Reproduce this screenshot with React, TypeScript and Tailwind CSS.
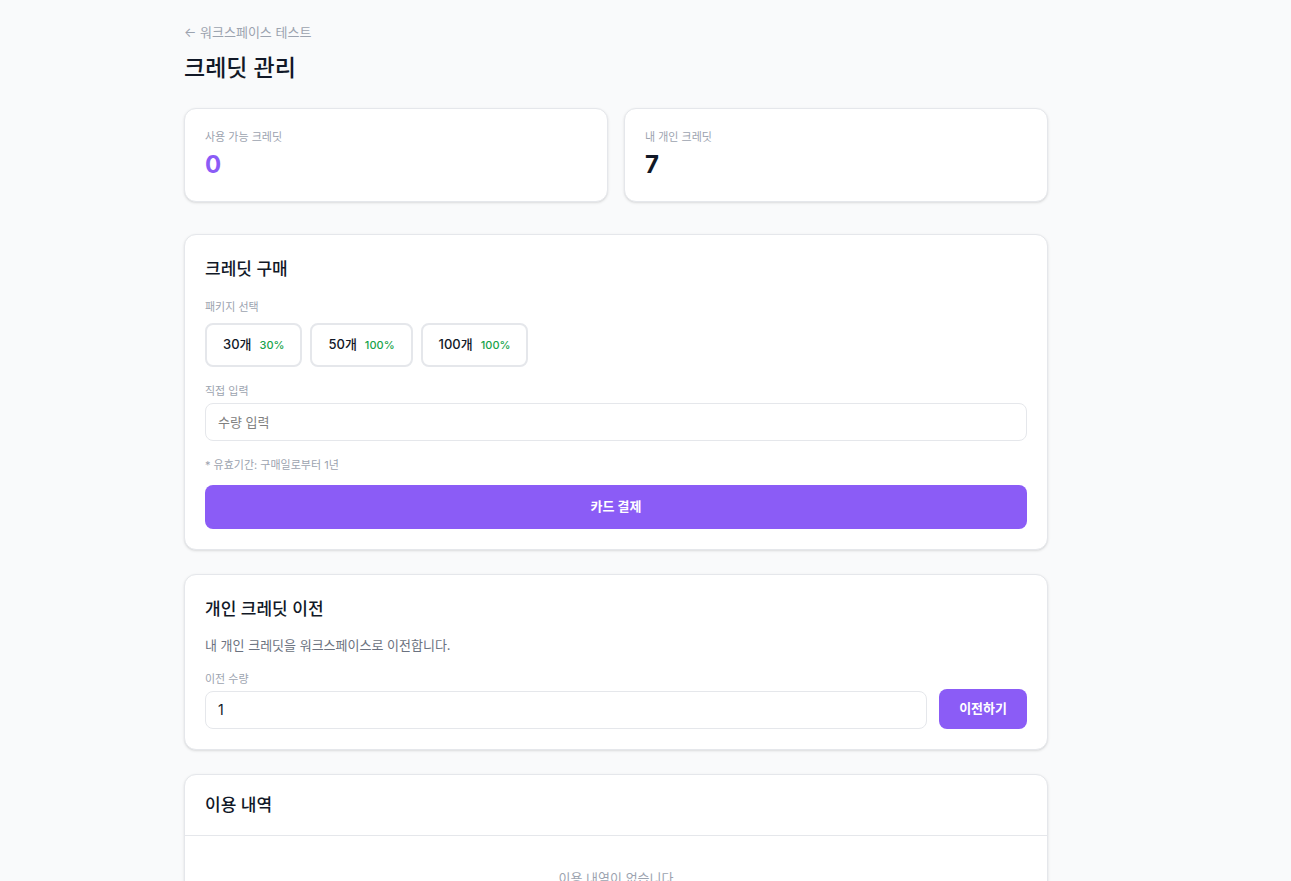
import React, { useState } from 'react';

interface CreditPackage {
  count: number;
  discount: number;
}

const PACKAGES: CreditPackage[] = [
  { count: 30, discount: 30 },
  { count: 50, discount: 100 },
  { count: 100, discount: 100 },
];

const CARD = 'bg-white border border-[#e5e7eb] rounded-xl shadow-sm';
const HEADING = 'text-[17px] leading-7 font-medium';
const LABEL = 'block text-[11px] leading-4 text-[#9ca3af]';
const INPUT = 'block w-full h-[38px] px-3 pb-px border border-[#e5e7eb] rounded-lg text-sm text-[#111827] bg-white placeholder:text-[13px] placeholder:text-[#808080] focus:outline-none focus:border-[#8b5cf6]';
const PRIMARY_BUTTON = 'rounded-lg bg-[#8b5cf6] text-white text-[13px] font-bold';

const StatCard: React.FC<{ title: string; value: number; highlight?: boolean }> = ({ title, value, highlight }) => (
  <div className={`${CARD} p-5`}>
    <p className={`${LABEL} mb-1`}>{title}</p>
    <p className={`text-2xl font-bold ${highlight ? 'text-[#8b5cf6]' : 'text-[#111827]'}`}>{value}</p>
  </div>
);

const App: React.FC = () => {
  const [selected, setSelected] = useState<number | null>(null);
  const [amount, setAmount] = useState('');
  const [transfer, setTransfer] = useState('1');

  return (
    <div className="min-h-screen bg-[#f9fafb] font-[Inter,'Noto_Sans_CJK_KR',sans-serif] text-[#111827]">
      <main className="max-w-4xl ml-[168px] mr-6 px-4 py-5">
        <header className="mb-6">
          <a href="#" className="block w-fit text-[13px] leading-6 text-[#9ca3af]">← 워크스페이스 테스트</a>
          <h1 className="text-[23px] leading-8 font-medium mt-2">크레딧 관리</h1>
        </header>

        <div className="grid grid-cols-2 gap-4 mb-8">
          <StatCard title="사용 가능 크레딧" value={0} highlight />
          <StatCard title="내 개인 크레딧" value={7} />
        </div>

        <section className={`${CARD} p-5 mb-6`}>
          <h2 className={`${HEADING} mb-4`}>크레딧 구매</h2>
          <p className={`${LABEL} mb-2`}>패키지 선택</p>
          <div className="flex flex-wrap gap-2 mb-4">
            {PACKAGES.map(pkg => (
              <button
                key={pkg.count}
                type="button"
                onClick={() => setSelected(pkg.count)}
                className={`h-11 px-4 border-2 rounded-lg text-[13px] font-medium ${selected === pkg.count ? 'border-[#8b5cf6]' : 'border-[#e5e7eb]'}`}
              >
                {pkg.count}개
                <span className="ml-2 text-[11px] font-medium text-[#16a34a]">{pkg.discount}%</span>
              </button>
            ))}
          </div>
          <label htmlFor="amount" className={`${LABEL} mb-1`}>직접 입력</label>
          <input id="amount" type="number" className={INPUT} placeholder="수량 입력" value={amount} onChange={e => setAmount(e.target.value)} />
          <p className={`${LABEL} mt-4 mb-3`}>* 유효기간: 구매일로부터 1년</p>
          <button type="button" className={`${PRIMARY_BUTTON} w-full h-11`}>카드 결제</button>
        </section>

        <section className={`${CARD} p-5 mb-6`}>
          <h2 className={`${HEADING} mb-3`}>개인 크레딧 이전</h2>
          <p className="text-[13px] leading-5 text-[#6b7280] mb-4">내 개인 크레딧을 워크스페이스로 이전합니다.</p>
          <div className="flex items-end gap-3">
            <div className="flex-1">
              <label htmlFor="transfer" className={`${LABEL} mb-1`}>이전 수량</label>
              <input id="transfer" type="number" className={INPUT} value={transfer} onChange={e => setTransfer(e.target.value)} />
            </div>
            <button type="button" className={`${PRIMARY_BUTTON} h-10 px-5`}>이전하기</button>
          </div>
        </section>

        <section className={CARD}>
          <h2 className={`${HEADING} px-5 py-4 border-b border-[#e5e7eb]`}>이용 내역</h2>
          <p className="py-8 text-center text-[13px] leading-5 text-[#9ca3af]">이용 내역이 없습니다</p>
        </section>
      </main>
    </div>
  );
};

export default App;
